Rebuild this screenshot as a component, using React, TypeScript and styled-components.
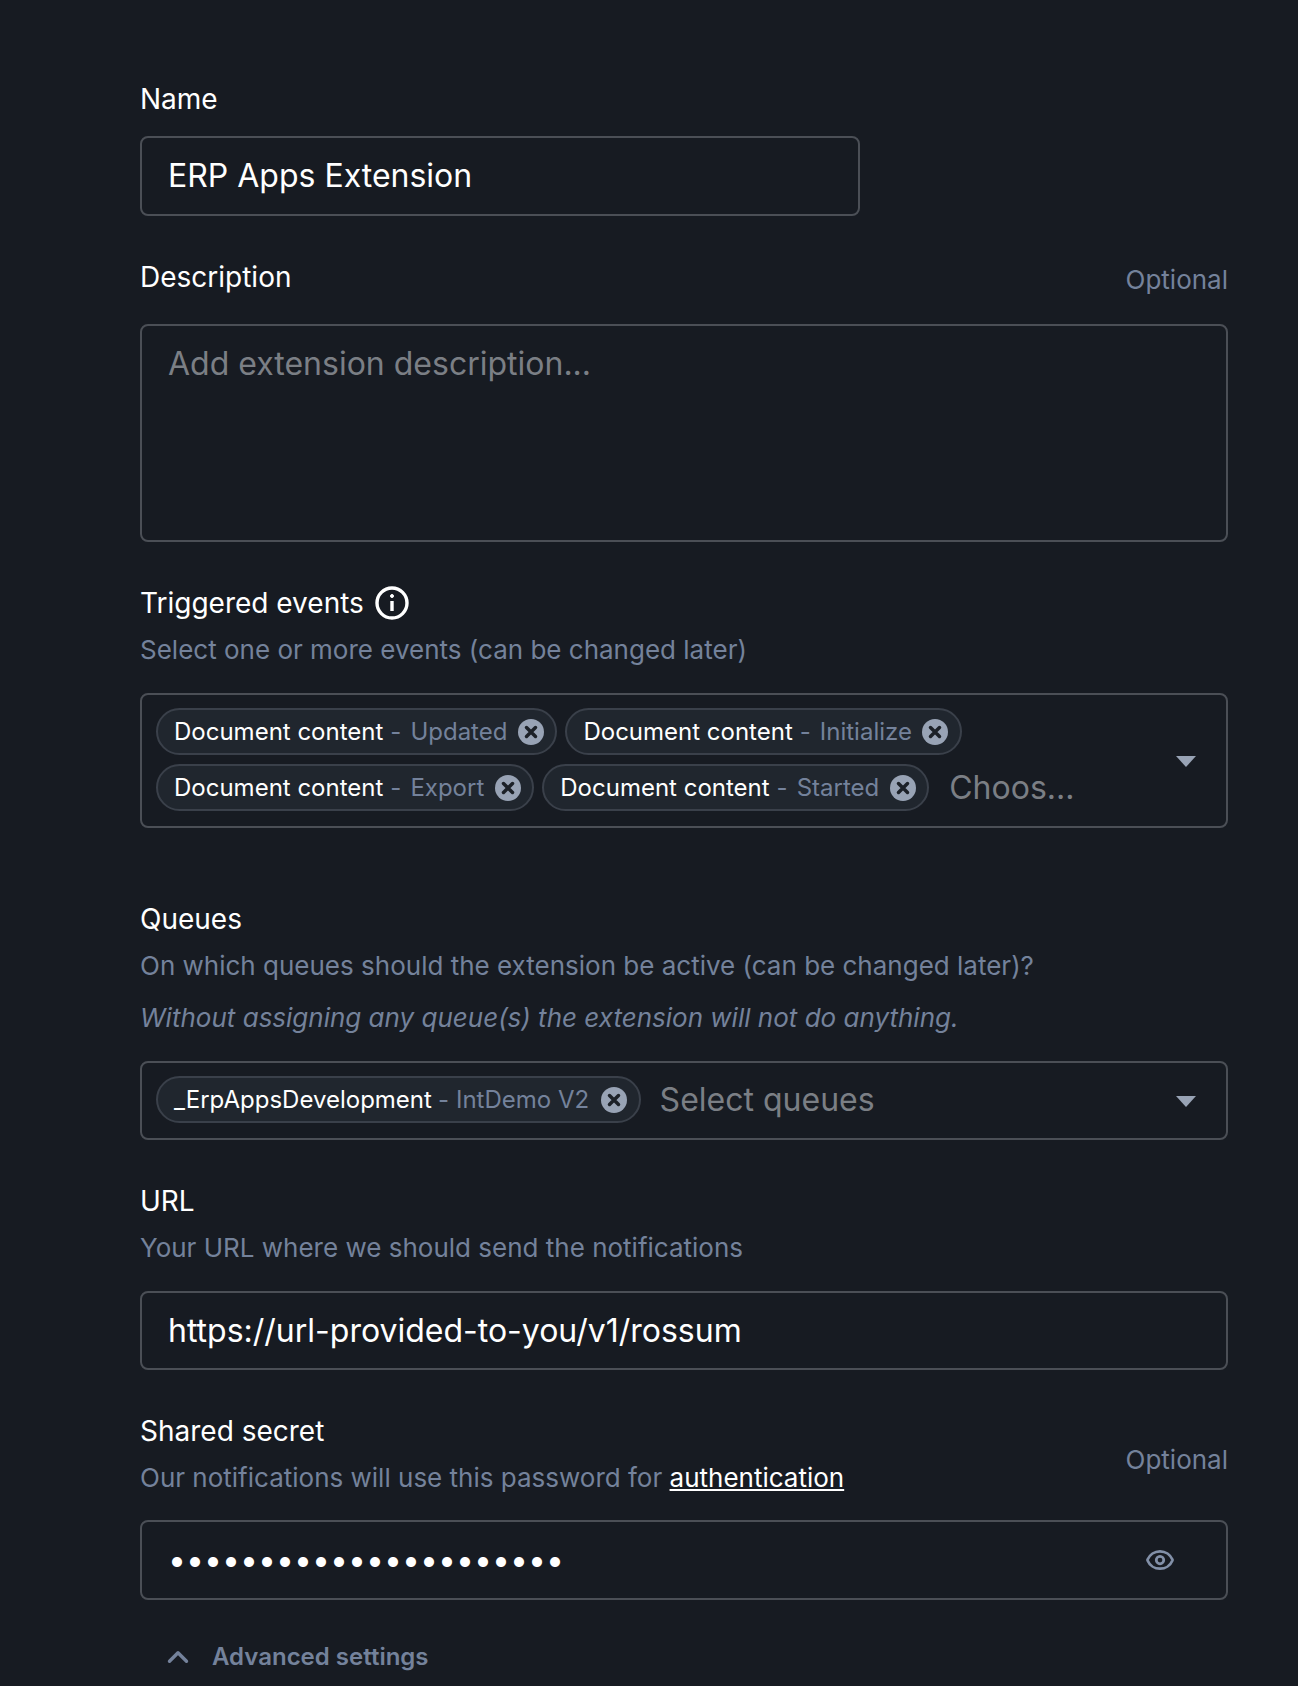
import React from 'react'
import styled, { createGlobalStyle } from 'styled-components'
import { ChevronUp, Eye } from 'lucide-react'

const GlobalStyle = createGlobalStyle`
  html, body {
    margin: 0;
    padding: 0;
    background: #171b22;
  }
  * {
    box-sizing: border-box;
  }
`

const Page = styled.div`
  width: 1298px;
  height: 1686px;
  overflow: hidden;
  padding: 79px 70px 0 140px;
  background: #171b22;
  color: #fff;
  font-family: Inter, 'Liberation Sans', sans-serif;
`

const Field = styled.div<{ $top?: number }>`
  margin-top: ${(p) => p.$top ?? 42}px;
`

const Header = styled.div<{ $bottom?: number; $align?: string }>`
  display: flex;
  justify-content: space-between;
  align-items: ${(p) => p.$align ?? 'center'};
  margin-bottom: ${(p) => p.$bottom ?? 23}px;
`

const Label = styled.div`
  display: flex;
  align-items: center;
  gap: 11px;
  font-size: 28px;
  line-height: 40px;
  color: #fff;
`

const Hint = styled.div<{ $italic?: boolean }>`
  margin-top: ${(p) => (p.$italic ? 12 : 7)}px;
  font-size: 26px;
  line-height: 40px;
  color: #74829b;
  font-style: ${(p) => (p.$italic ? 'italic' : 'normal')};
`

const Optional = styled.div<{ $offset?: number }>`
  margin-top: ${(p) => p.$offset ?? 0}px;
  font-size: 26px;
  line-height: 40px;
  color: #74829b;
`

const Link = styled.a`
  color: #fff;
  text-decoration: underline;
`

const Box = styled.div<{ $width?: number; $height?: number }>`
  display: flex;
  align-items: center;
  width: ${(p) => (p.$width ? `${p.$width}px` : '100%')};
  height: ${(p) => p.$height ?? 80}px;
  padding: 0 51px 0 26px;
  border: 2px solid #4b4f56;
  border-radius: 8px;
  font-size: 32px;
  line-height: 38px;
  color: #fff;
`

const TextArea = styled(Box)`
  align-items: flex-start;
  height: 218px;
  padding-top: 18px;
  line-height: 40px;
  color: #7b7f85;
`

const Dots = styled.span`
  flex: 1;
`

const SelectBox = styled.div<{ $height: number; $bottom?: number }>`
  position: relative;
  display: flex;
  align-items: center;
  height: ${(p) => p.$height}px;
  padding: 0 14px ${(p) => p.$bottom ?? 2}px;
  border: 2px solid #4b4f56;
  border-radius: 8px;
`

const ChipWrap = styled.div`
  display: flex;
  flex-wrap: wrap;
  align-items: center;
  gap: 9px 8px;
  flex: 1;
  max-width: 1000px;
`

const Chip = styled.div`
  display: flex;
  align-items: center;
  height: 47px;
  padding: 0 11.5px 0 16px;
  border: 2px solid #3a404a;
  border-radius: 24px;
  background: #20262e;
  font-size: 24px;
  color: #fff;
  white-space: nowrap;
`

const ChipDash = styled.span<{ $tight?: boolean }>`
  margin: ${(p) => (p.$tight ? '0 7px 0 6px' : '0 9px 0 7px')};
  color: #74829b;
`

const ChipSub = styled.span`
  color: #74829b;
`

const ChipClose = styled.svg<{ $tight?: boolean }>`
  width: 26px;
  height: 26px;
  margin-left: ${(p) => (p.$tight ? 12 : 10.5)}px;
`

const Placeholder = styled.span<{ $left: number }>`
  margin-left: ${(p) => p.$left}px;
  font-size: 32px;
  color: #7b7f85;
`

const Caret = styled.svg`
  position: absolute;
  right: 30px;
  top: 50%;
  width: 20px;
  height: 11px;
  margin-top: -5px;
`

const Advanced = styled.div`
  display: flex;
  align-items: center;
  gap: 17px;
  margin-top: 37px;
  padding-left: 21px;
  font-size: 24px;
  font-weight: 600;
  line-height: 40px;
  color: #74829b;
`

const InfoIcon = () => (
  <svg width="34" height="34" viewBox="0 0 34 34" fill="none" stroke="#fff" strokeWidth="3.4">
    <circle cx="17" cy="17" r="15" />
    <path d="M17 15v10" />
    <circle cx="17" cy="10" r="1.5" fill="#fff" strokeWidth="1" />
  </svg>
)

const CloseIcon = ({ tight }: { tight?: boolean }) => (
  <ChipClose viewBox="0 0 26 26" $tight={tight}>
    <circle cx="13" cy="13" r="13" fill="#98a3b5" />
    <path d="M8.5 8.5l9 9M17.5 8.5l-9 9" stroke="#1c2128" strokeWidth="3.5" strokeLinecap="round" />
  </ChipClose>
)

const CaretIcon = () => (
  <Caret viewBox="0 0 20 11">
    <path d="M0 0h20L10 11z" fill="#98a3b5" />
  </Caret>
)

const EventChip = ({ main, sub, tight }: { main: string; sub: string; tight?: boolean }) => (
  <Chip>
    {main}
    <ChipDash $tight={tight}>-</ChipDash>
    <ChipSub>{sub}</ChipSub>
    <CloseIcon tight={tight} />
  </Chip>
)

const App = () => {
  return (
    <Page>
      <GlobalStyle />
      <Field $top={0}>
        <Header $bottom={17}>
          <Label>Name</Label>
        </Header>
        <Box $width={720}>ERP Apps Extension</Box>
      </Field>

      <Field $top={41}>
        <Header $bottom={24} $align="flex-start">
          <Label>Description</Label>
          <Optional $offset={3}>Optional</Optional>
        </Header>
        <TextArea>Add extension description...</TextArea>
      </Field>

      <Field $top={41}>
        <Label>
          Triggered events
          <InfoIcon />
        </Label>
        <Header>
          <Hint>Select one or more events (can be changed later)</Hint>
        </Header>
        <SelectBox $height={135}>
          <ChipWrap>
            <EventChip main="Document content" sub="Updated" />
            <EventChip main="Document content" sub="Initialize" />
            <EventChip main="Document content" sub="Export" />
            <EventChip main="Document content" sub="Started" />
            <Placeholder $left={12}>Choos...</Placeholder>
          </ChipWrap>
          <CaretIcon />
        </SelectBox>
      </Field>

      <Field $top={71}>
        <Label>Queues</Label>
        <Hint>On which queues should the extension be active (can be changed later)?</Hint>
        <Header>
          <Hint $italic>Without assigning any queue(s) the extension will not do anything.</Hint>
        </Header>
        <SelectBox $height={79}>
          <ChipWrap>
            <EventChip main="_ErpAppsDevelopment" sub="IntDemo V2" tight />
            <Placeholder $left={11}>Select queues</Placeholder>
          </ChipWrap>
          <CaretIcon />
        </SelectBox>
      </Field>

      <Field $top={41}>
        <Label>URL</Label>
        <Header>
          <Hint>Your URL where we should send the notifications</Hint>
        </Header>
        <Box $height={79}>https://url-provided-to-you/v1/rossum</Box>
      </Field>

      <Field $top={41}>
        <Header $bottom={22}>
          <div>
            <Label>Shared secret</Label>
            <Hint>
              Our notifications will use this password for <Link href="#">authentication</Link>
            </Hint>
          </div>
          <Optional $offset={10}>Optional</Optional>
        </Header>
        <Box>
          <Dots>••••••••••••••••••••••</Dots>
          <Eye size={30} color="#8290a8" strokeWidth={2.2} />
        </Box>
      </Field>

      <Advanced>
        <ChevronUp size={34} strokeWidth={2.4} />
        Advanced settings
      </Advanced>
    </Page>
  )
}

export default App
